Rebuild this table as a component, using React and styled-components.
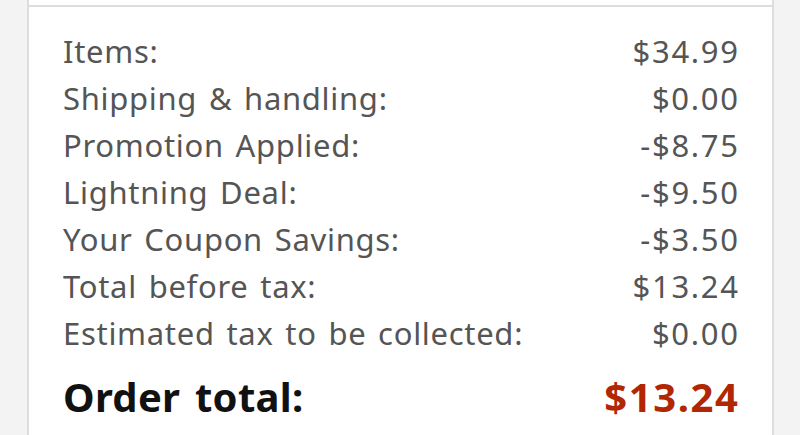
import styled, { createGlobalStyle } from "styled-components";

const Global = createGlobalStyle`
  html, body {
    margin: 0;
    padding: 0;
    background: #f3f3f3;
  }
  body {
    font-family: "Noto Sans", "Open Sans", sans-serif;
  }
`;

const Page = styled.div`
  width: 800px;
  height: 435px;
  overflow: hidden;
  padding: 0 26px 0 27px;
  box-sizing: border-box;
`;

const PrevCard = styled.div`
  height: 5px;
  background: #fff;
  border: 2px solid #dddddd;
  border-top: none;
`;

const Card = styled.div`
  background: #fff;
  border: 2px solid #dddddd;
  border-top: none;
  padding: 21px 34px 30px 34px;
`;

const Row = styled.div`
  display: flex;
  justify-content: space-between;
  align-items: baseline;
  font-size: 31px;
  line-height: 47px;
  letter-spacing: 0.7px;
  word-spacing: 3px;
  color: #555555;
  white-space: nowrap;
`;

const TotalRow = styled(Row)`
  margin-top: 14px;
  font-size: 40px;
  line-height: 52px;
  letter-spacing: 0.3px;
  word-spacing: 4px;
  font-weight: 700;
  color: #111111;
`;

const Price = styled.span`
  letter-spacing: ${(p) => (p.$accent ? "1.6px" : "1.7px")};
  margin-right: ${(p) => (p.$accent ? "-1.6px" : "-1.7px")};
  color: ${(p) => (p.$accent ? "#b12704" : "inherit")};
`;

const lines = [
  ["Items:", "$34.99"],
  ["Shipping & handling:", "$0.00"],
  ["Promotion Applied:", "-$8.75"],
  ["Lightning Deal:", "-$9.50"],
  ["Your Coupon Savings:", "-$3.50"],
  ["Total before tax:", "$13.24"],
  ["Estimated tax to be collected:", "$0.00"],
];

export default function App() {
  return (
    <Page>
      <Global />
      <PrevCard />
      <Card>
        {lines.map(([label, value]) => (
          <Row key={label}>
            <span>{label}</span>
            <Price>{value}</Price>
          </Row>
        ))}
        <TotalRow>
          <span>Order total:</span>
          <Price $accent>$13.24</Price>
        </TotalRow>
      </Card>
    </Page>
  );
}
